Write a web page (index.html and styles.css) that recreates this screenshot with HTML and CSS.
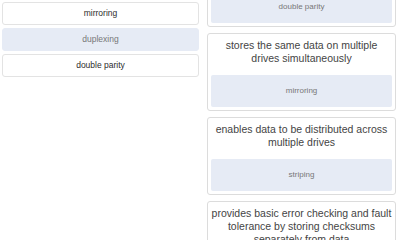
FILE: index.html
```html
<!DOCTYPE html>
<html lang="en">
<head>
    <meta charset="UTF-8">
    <title>Match the terms</title>
    <link rel="stylesheet" href="styles.css">
</head>
<body>
    <div class="match-board">
        <div class="choice-list">
            <div class="choice">mirroring</div>
            <div class="choice used">duplexing</div>
            <div class="choice">double parity</div>
        </div>

        <div class="target-list">
            <div class="target">
                <p class="target-text">protects data against two drive failures at once</p>
                <div class="drop-slot">double parity</div>
            </div>
            <div class="target">
                <p class="target-text">stores the same data on multiple drives simultaneously</p>
                <div class="drop-slot">mirroring</div>
            </div>
            <div class="target">
                <p class="target-text">enables data to be distributed across multiple drives</p>
                <div class="drop-slot">striping</div>
            </div>
            <div class="target">
                <p class="target-text">provides basic error checking and fault tolerance by storing checksums separately from data</p>
                <div class="drop-slot">parity</div>
            </div>
        </div>
    </div>
</body>
</html>
```

FILE: styles.css
```css
body {
    margin: 0;
    background-color: #fff;
    font-family: 'Liberation Sans', Arial, sans-serif;
    overflow: hidden;
}

.match-board {
    display: flex;
    gap: 8px;
    padding: 0 4px 0 2px;
}

.choice-list {
    width: 197px;
    padding-top: 2px;
    display: flex;
    flex-direction: column;
    gap: 3px;
}

.choice {
    height: 21px;
    line-height: 21px;
    border: 1px solid #e3e3e3;
    border-radius: 3px;
    text-align: center;
    font-size: 8.5px;
    color: #2b2b2b;
    background-color: #fff;
}

.choice.used {
    background-color: #e6ebf5;
    border-color: #e6ebf5;
    color: #777;
}

.target-list {
    flex: 1;
    margin-top: -51px;
    display: flex;
    flex-direction: column;
    gap: 6px;
}

.target {
    border: 1px solid #dcdcdc;
    border-radius: 3px;
    padding: 5px 3px 3px;
    text-align: center;
}

.target-text {
    margin: 0 0 10px;
    font-size: 10.5px;
    line-height: 13px;
    color: #444;
}

.drop-slot {
    height: 32px;
    line-height: 32px;
    background-color: #e6ebf5;
    border-radius: 2px;
    font-size: 8px;
    color: #777;
}
```
